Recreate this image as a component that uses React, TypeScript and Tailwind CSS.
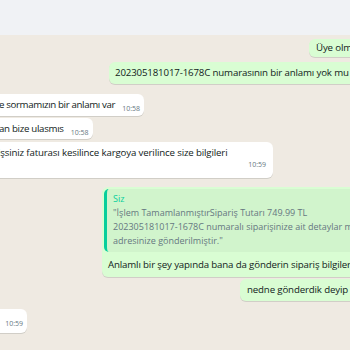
import React from "react";

export default function App() {
  return (
    <div className="w-[350px] h-[350px] overflow-hidden bg-[#efeae2] flex flex-col text-[9.7px] leading-[14px] tracking-[-0.15px] text-[#111b21] font-['Open_Sans',sans-serif]">
      <div className="h-[35px] shrink-0 bg-[#f0f2f5]" />

      <div className="flex flex-col w-[600px]">
        {/* B1 */}
        <div className="mt-[4px] ml-[309px] flex">
          <div className="h-[18px] bg-[#d9fdd3] rounded-l-[6px] shadow-[0_1px_0.5px_rgba(11,20,26,0.13)] flex items-center pl-[7px] pr-[40px] whitespace-nowrap">
            Üye olmadan sipariş verdik
          </div>
        </div>

        {/* B2 */}
        <div className="mt-[5px] ml-[109px] flex">
          <div className="h-[22px] bg-[#d9fdd3] rounded-l-[6px] shadow-[0_1px_0.5px_rgba(11,20,26,0.13)] flex items-center pl-[6px] pr-[40px] whitespace-nowrap">
            202305181017-1678C numarasının bir anlamı yok mu bu durumda
          </div>
        </div>

        {/* B3 incoming */}
        <div className="mt-[10px] flex">
          <div className="h-[22px] bg-white rounded-r-[6px] shadow-[0_1px_0.5px_rgba(11,20,26,0.13)] flex items-center whitespace-nowrap pr-[4px]">
            <span className="-ml-[1px] tracking-[-0.35px]">e sormamızın bir anlamı var</span>
            <span className="ml-[7px] mt-[8px] text-[7px] leading-[8px] tracking-normal text-[#667781]">10:58</span>
          </div>
        </div>

        {/* B4 */}
        <div className="mt-[2px] flex">
          <div className="h-[21px] bg-white rounded-r-[6px] shadow-[0_1px_0.5px_rgba(11,20,26,0.13)] flex items-center whitespace-nowrap pr-[4px]">
            <span className="-ml-[1px] tracking-[-0.3px]">an bize ulasmıs</span>
            <span className="ml-[7px] mt-[8px] text-[7px] leading-[8px] tracking-normal text-[#667781]">10:58</span>
          </div>
        </div>

        {/* B5 */}
        <div className="mt-[3px] flex">
          <div className="w-[273px] h-[36px] bg-white rounded-r-[6px] shadow-[0_1px_0.5px_rgba(11,20,26,0.13)] flex flex-col whitespace-nowrap pt-[4px] pr-[7px]">
            <span className="-ml-[2px]">işsiniz faturası kesilince kargoya verilince size bilgileri</span>
            <span className="self-end mt-[1px] text-[7px] leading-[8px] tracking-normal text-[#667781]">10:59</span>
          </div>
        </div>

        {/* B6 quoted */}
        <div className="mt-[9px] ml-[102px] flex">
          <div className="w-[400px] h-[90px] bg-[#d9fdd3] rounded-l-[6px] shadow-[0_1px_0.5px_rgba(11,20,26,0.13)] flex flex-col pl-[2px] pt-[2px] whitespace-nowrap">
            <div className="h-[63px] bg-[#d1f4cc] rounded-l-[5px] border-l-[3px] border-[#06cf9c] flex flex-col pl-[6px] pt-[3px] text-[9px] tracking-normal">
              <span className="text-[#06cf9c] leading-[14px]">Siz</span>
              <span className="text-[#667781] leading-[14px]">"İşlem TamamlanmıştırSipariş Tutarı 749.99 TL</span>
              <span className="text-[#667781] leading-[14px]">202305181017-1678C numaralı siparişinize ait detaylar mnsiparis</span>
              <span className="text-[#667781] leading-[14px]">adresinize gönderilmiştir."</span>
            </div>
            <div className="pl-[4px] mt-[6px]">Anlamlı bir şey yapında bana da gönderin sipariş bilgilerini</div>
          </div>
        </div>

        {/* B7 */}
        <div className="mt-[2px] ml-[240px] flex">
          <div className="h-[22px] bg-[#d9fdd3] rounded-l-[6px] shadow-[0_1px_0.5px_rgba(11,20,26,0.13)] flex items-center pl-[7px] pr-[40px] whitespace-nowrap">
            nedne gönderdik deyip
          </div>
        </div>

        {/* B8 */}
        <div className="mt-[8px] flex">
          <div className="w-[27px] h-[24px] bg-white rounded-r-[6px] shadow-[0_1px_0.5px_rgba(11,20,26,0.13)] flex items-end justify-end pb-[5px] pr-[4px]">
            <span className="text-[7px] leading-[8px] tracking-normal text-[#667781]">10:59</span>
          </div>
        </div>
      </div>
    </div>
  );
}
